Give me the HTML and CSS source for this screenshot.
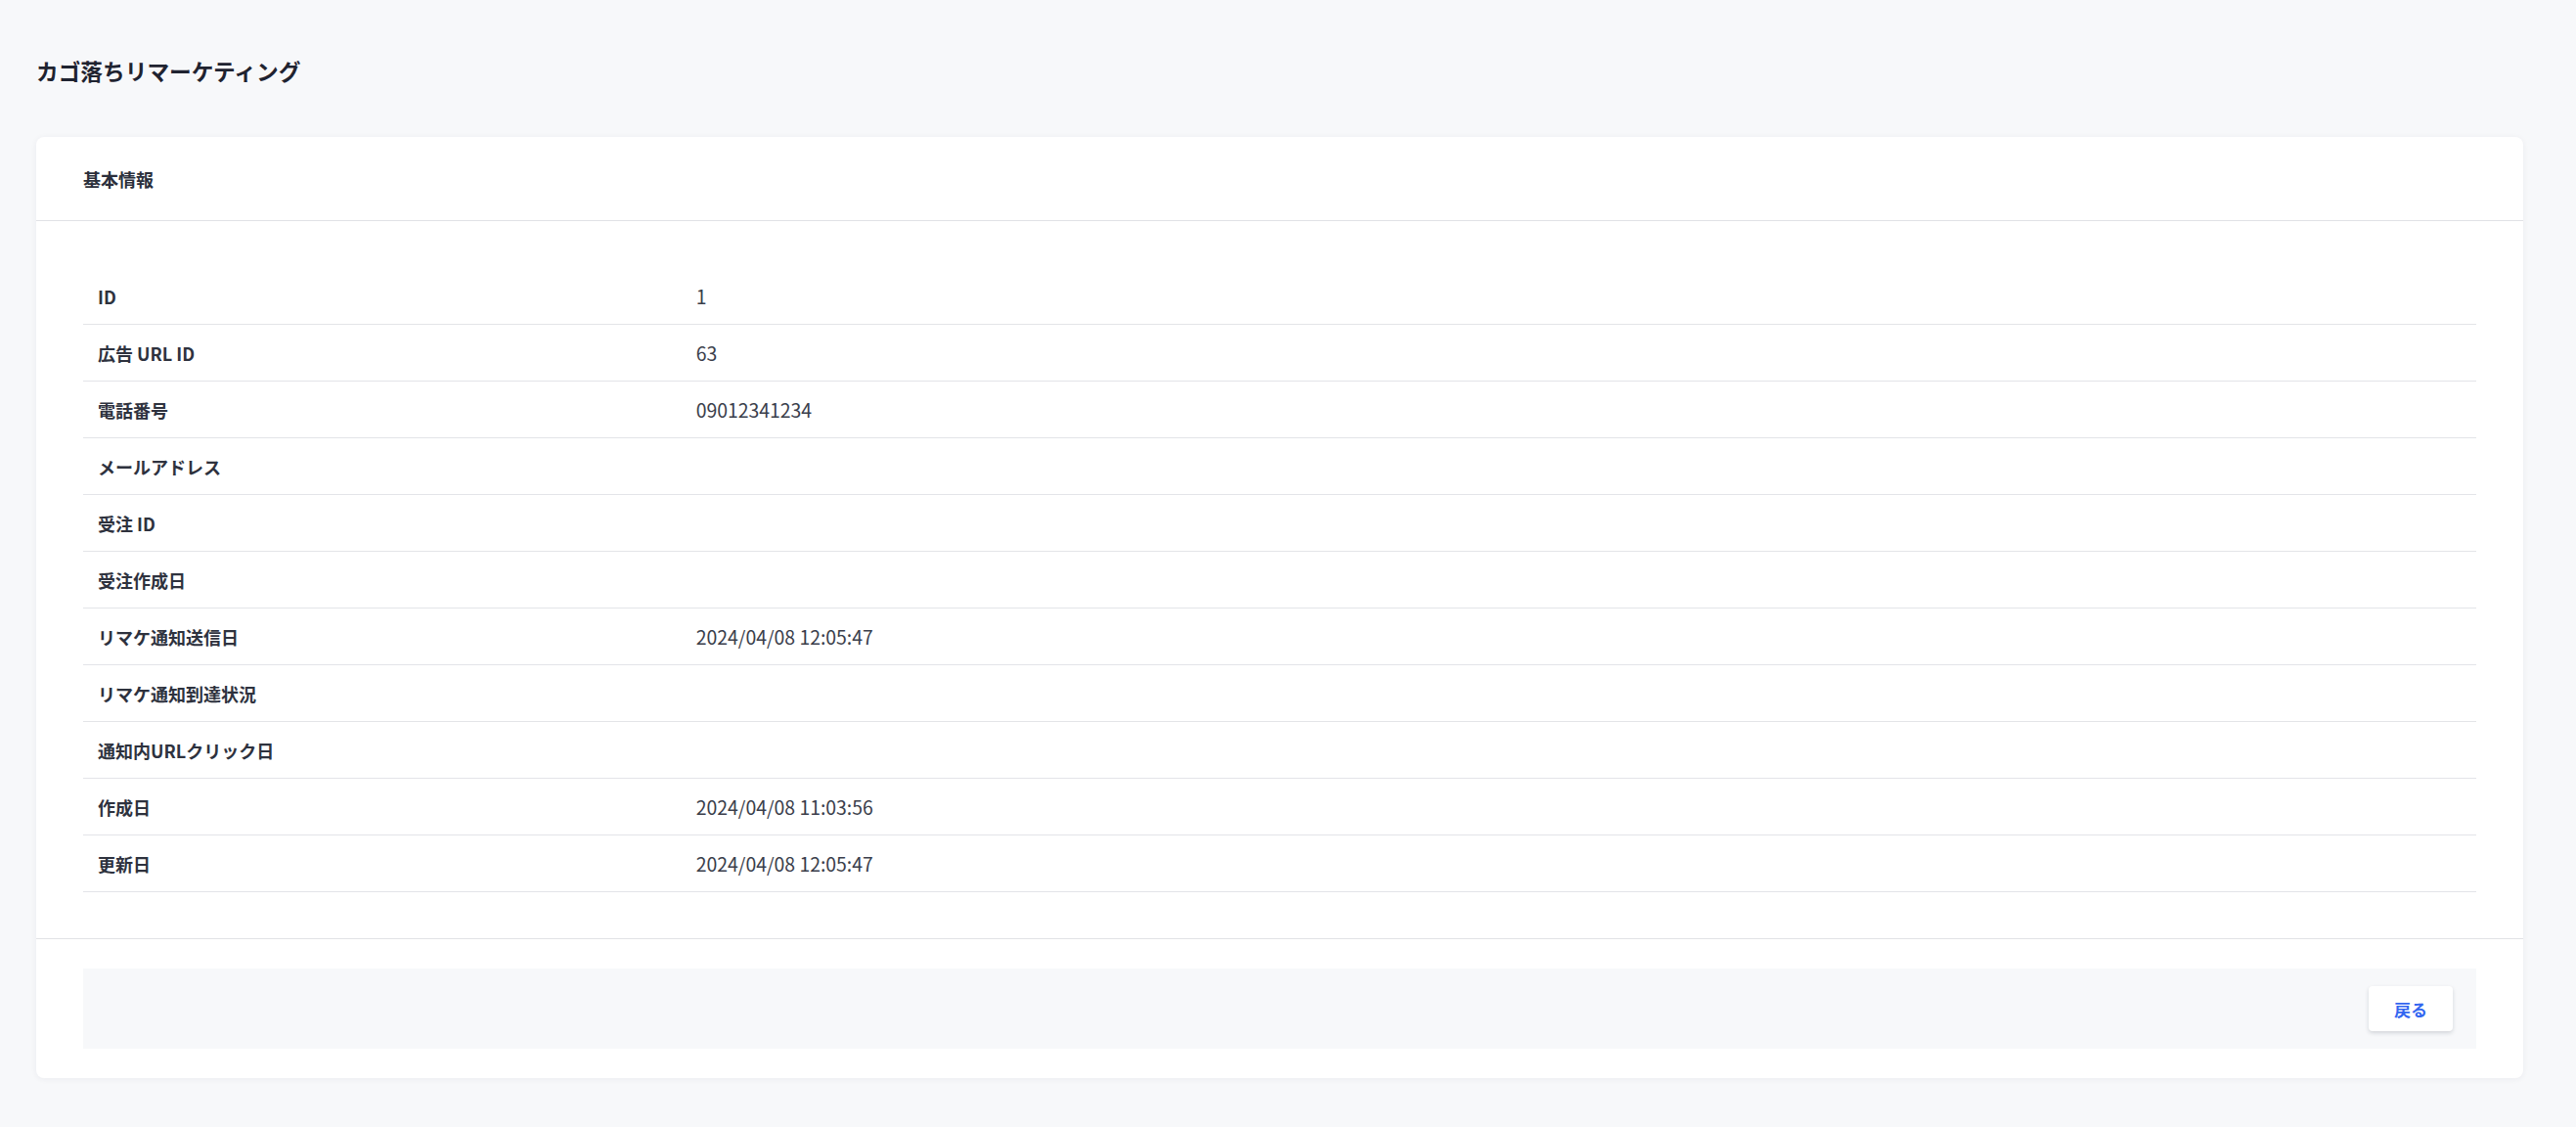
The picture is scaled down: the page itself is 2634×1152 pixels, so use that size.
FILE: index.html
```html
<!DOCTYPE html>
<html lang="ja">
<head>
<meta charset="utf-8">
<title>カゴ落ちリマーケティング</title>
<link rel="stylesheet" href="styles.css">
</head>
<body>
<div class="page">
  <h1 class="page-title">カゴ落ちリマーケティング</h1>
  <section class="card">
    <div class="card-header">基本情報</div>
    <div class="card-body">
      <table class="info-table">
        <tbody>
          <tr><th>ID</th><td>1</td></tr>
          <tr><th>広告 URL ID</th><td>63</td></tr>
          <tr><th>電話番号</th><td>09012341234</td></tr>
          <tr><th>メールアドレス</th><td></td></tr>
          <tr><th>受注 ID</th><td></td></tr>
          <tr><th>受注作成日</th><td></td></tr>
          <tr><th>リマケ通知送信日</th><td>2024/04/08 12:05:47</td></tr>
          <tr><th>リマケ通知到達状況</th><td></td></tr>
          <tr><th>通知内URLクリック日</th><td></td></tr>
          <tr><th>作成日</th><td>2024/04/08 11:03:56</td></tr>
          <tr><th>更新日</th><td>2024/04/08 12:05:47</td></tr>
        </tbody>
      </table>
    </div>
    <div class="card-footer">
      <div class="actions">
        <button class="btn-back" type="button">戻る</button>
      </div>
    </div>
  </section>
</div>
</body>
</html>
```

FILE: styles.css
```css
html, body {
  margin: 0;
  padding: 0;
  background: #f7f8fa;
  font-family: "Noto Sans CJK JP", "Noto Sans", sans-serif;
  color: #2e323e;
}

.page {
  padding: 57px 54px 50px 37px;
}

.page-title {
  margin: 0 0 51px 0;
  font-size: 22.7px;
  line-height: 32px;
  font-weight: 700;
  color: #1f2330;
}

.card {
  background: #ffffff;
  border-radius: 8px;
  box-shadow: 0 1px 6px rgba(30, 40, 60, 0.06);
}

.card-header {
  height: 85px;
  display: flex;
  align-items: center;
  padding: 0 48px;
  font-size: 18px;
  font-weight: 700;
  color: #2b2f3b;
  border-bottom: 1px solid #e1e2e6;
}

.card-body {
  padding: 48px 48px 47px;
  border-bottom: 1px solid #e1e2e6;
}

.info-table {
  width: 100%;
  border-collapse: collapse;
}

.info-table tr {
  border-bottom: 1px solid #e3e4e8;
}

.info-table th,
.info-table td {
  height: 57px;
  padding: 0 15px;
  font-size: 18px;
  text-align: left;
  vertical-align: middle;
}

.info-table th {
  width: 25%;
  font-weight: 700;
  color: #2e323e;
}

.info-table td {
  font-size: 19.4px;
  font-weight: 400;
  color: #3a3e4b;
}

.card-footer {
  padding: 30px 48px 30px;
}

.actions {
  background: #f7f8fa;
  height: 82px;
  display: flex;
  align-items: center;
  justify-content: flex-end;
  padding: 0 24px;
}

.btn-back {
  width: 86px;
  height: 46px;
  border: none;
  border-radius: 4px;
  background: #ffffff;
  box-shadow: 0 2px 4px rgba(20, 30, 50, 0.16);
  font-family: "Noto Sans CJK JP", "Noto Sans", sans-serif;
  font-size: 17px;
  font-weight: 700;
  color: #3366f0;
  cursor: pointer;
}
```
